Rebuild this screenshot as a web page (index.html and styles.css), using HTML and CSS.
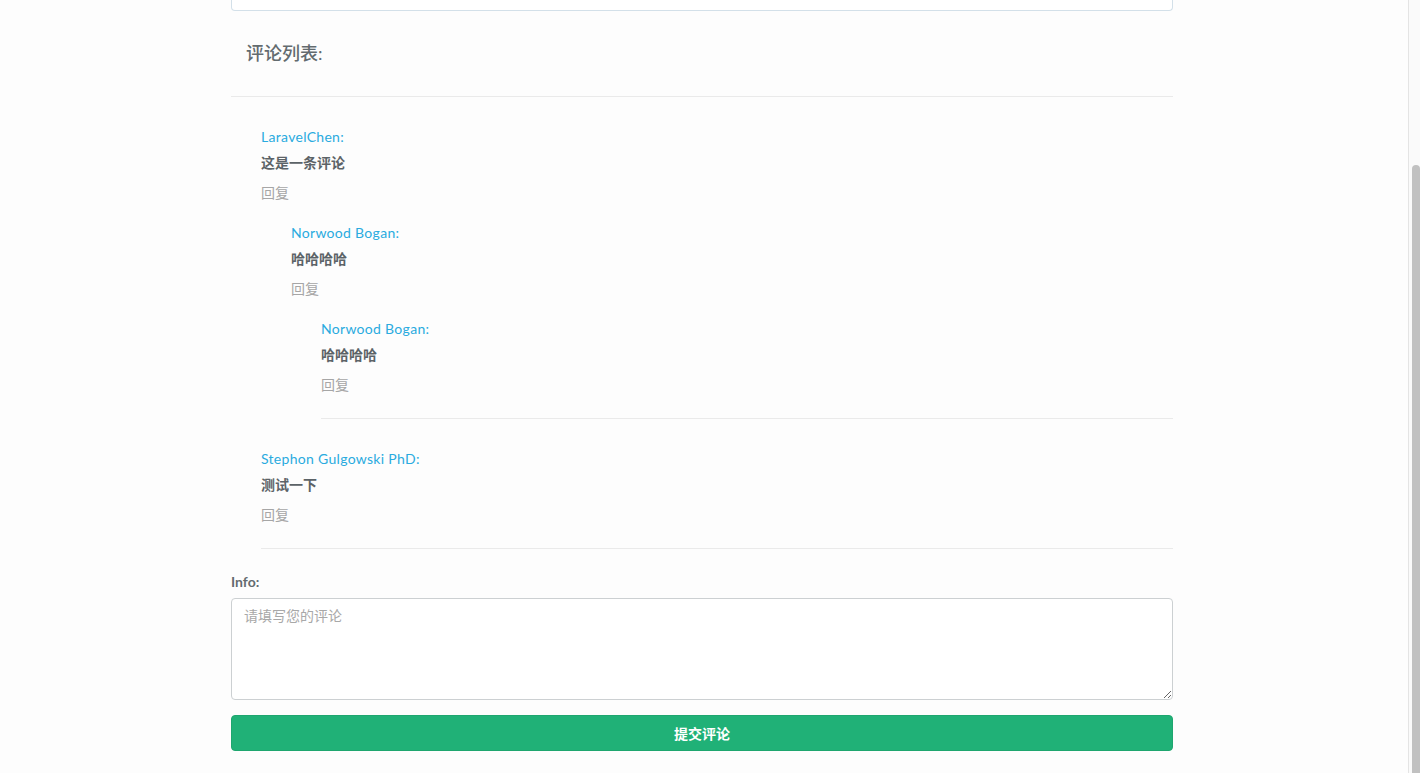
FILE: index.html
```html
<html>
  <head>
    <meta charset="utf-8">
    <link rel="stylesheet" href="styles.css">
  </head>
  <body>
    <div class="page">
      <div class="container">
        <div class="panel-end"></div>

        <h3 class="list-title">评论列表<span class="colon">:</span></h3>
        <hr class="list-line">

        <div class="comment">
          <div class="name">LaravelChen:</div>
          <div class="content">这是一条评论</div>
          <div class="reply">回复</div>

          <div class="comment child">
            <div class="name">Norwood Bogan:</div>
            <div class="content">哈哈哈哈</div>
            <div class="reply">回复</div>

            <div class="comment child">
              <div class="name">Norwood Bogan:</div>
              <div class="content">哈哈哈哈</div>
              <div class="reply">回复</div>
              <hr class="leaf-line">
            </div>
          </div>
        </div>

        <div class="comment">
          <div class="name">Stephon Gulgowski PhD:</div>
          <div class="content">测试一下</div>
          <div class="reply">回复</div>
          <hr class="leaf-line">
        </div>

        <div class="form">
          <label class="label">Info:</label>
          <textarea class="input" placeholder="请填写您的评论"></textarea>
          <button class="submit">提交评论</button>
        </div>
      </div>
    </div>

    <!-- scrollbar of the screenshot -->
    <div class="scrollbar"><div class="thumb"></div></div>
  </body>
</html>
```

FILE: styles.css
```css
html, body {
  margin: 0;
  height: 100%;
  overflow: hidden;
  background: #fdfdfd;
}

body {
  font-family: Lato, "Noto Sans CJK SC", sans-serif;
  font-size: 14px;
  color: #636b6f;
}

.page {
  width: 1404px;
}

.container {
  width: 942px;
  margin: 0 auto;
}

.panel-end {
  height: 10px;
  background: #fff;
  border: 1px solid #d3e0e9;
  border-top: none;
  border-radius: 0 0 4px 4px;
}

.list-title {
  margin: 30px 0 0 0;
  padding-left: 15px;
  font-size: 18px;
  line-height: 24px;
  font-weight: 500;
  color: #636b6f;
}

.list-title .colon {
  font-weight: 400;
}

.list-line {
  margin: 31px 0 0 0;
  border: none;
  border-top: 1px solid #eaeaea;
}

.comment {
  padding-left: 30px;
  margin-top: 30px;
}

.comment.child {
  margin-top: 20px;
}

.name {
  line-height: 20px;
  color: #2aabdf;
  letter-spacing: 0.3px;
}

.content {
  margin-top: 6px;
  line-height: 20px;
  font-weight: 600;
  color: #5c6367;
}

.reply {
  margin-top: 10px;
  line-height: 20px;
  color: #a6a6a6;
  cursor: pointer;
}

.leaf-line {
  margin: 23px 0 0 0;
  border: none;
  border-top: 1px solid #eaeaea;
}

.form {
  margin-top: 23px;
}

.label {
  display: block;
  line-height: 20px;
  font-weight: 700;
  margin-bottom: 6px;
}

.input {
  display: block;
  box-sizing: border-box;
  width: 100%;
  height: 102px;
  padding: 7px 12px;
  border: 1px solid #ccd0d2;
  border-radius: 4px;
  background: #fff;
  font-family: Lato, "Noto Sans CJK SC", sans-serif;
  font-size: 14px;
  line-height: 20px;
  color: #555;
}

.input::placeholder {
  color: #a8a8a8;
}

.submit {
  display: block;
  width: 100%;
  height: 36px;
  margin-top: 15px;
  padding-bottom: 2px;
  border: 1px solid #1ea66f;
  border-radius: 4px;
  background: #20b177;
  color: #fff;
  font-family: Lato, "Noto Sans CJK SC", sans-serif;
  font-size: 14px;
  font-weight: 700;
}

.scrollbar {
  position: fixed;
  top: 0;
  right: 0;
  width: 11px;
  height: 100%;
  background: #fafafa;
  border-left: 1px solid #e4e4e4;
}

.thumb {
  position: absolute;
  top: 165px;
  bottom: 0;
  left: 3px;
  width: 8px;
  background: #c1c1c1;
  border-radius: 4px 4px 0 0;
}
```
